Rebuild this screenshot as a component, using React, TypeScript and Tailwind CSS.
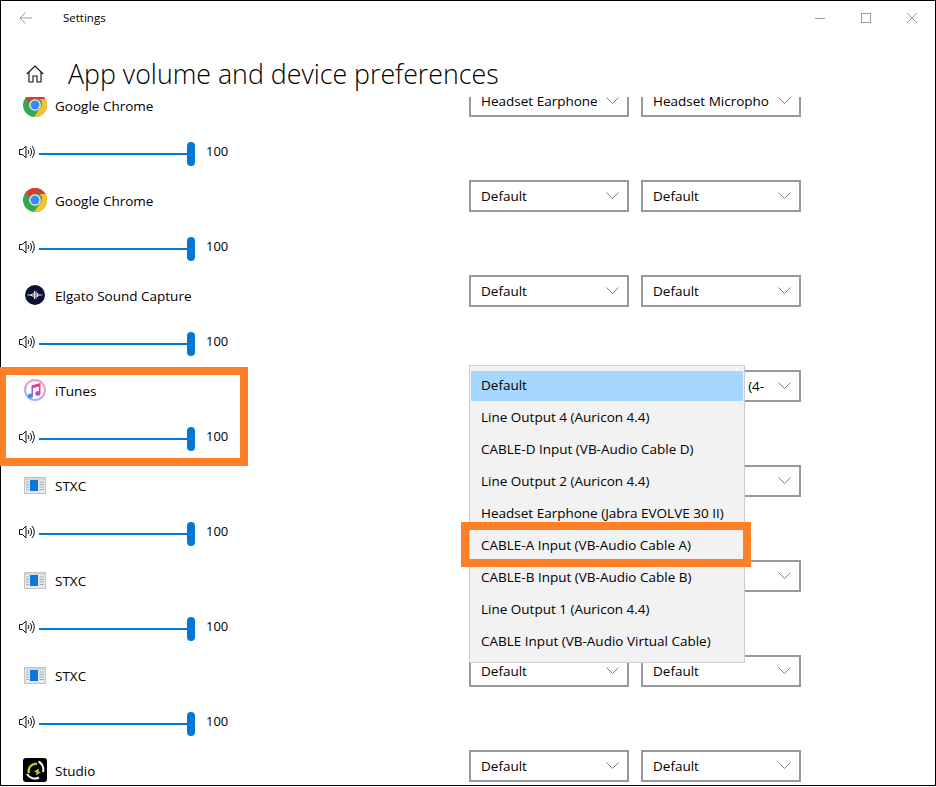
import type { ReactNode } from "react";

const font = "font-['Open_Sans',sans-serif]";

function ChromeIcon() {
  return (
    <svg width="24" height="24" viewBox="0 0 24 24">
      <circle cx="12" cy="12" r="12" fill="#34a853" />
      <path d="M22.4 6A12 12 0 0 1 11 24L17.2 15A6 6 0 0 0 17 6Z" fill="#fbc02d" />
      <path d="M2.6 4.5A12 12 0 0 1 22.4 6H12A6 6 0 0 0 6.3 10Z" fill="#dd3b30" />
      <circle cx="12" cy="12" r="5.8" fill="#f1f1f1" />
      <circle cx="12" cy="12" r="4.5" fill="#4285f4" />
    </svg>
  );
}

function ElgatoIcon() {
  return (
    <svg width="20" height="20" viewBox="0 0 20 20">
      <circle cx="10" cy="10" r="10" fill="#0e1233" />
      <path
        d="M2.5 10h1.5M5 9v2M6.5 9v2M8 8v4M9.5 6v8M11 6.5v7M12.5 8v4M14 9v2M15.5 9.4v1.2M16.5 10h1"
        stroke="#e2e5f2"
        strokeWidth="1.1"
        fill="none"
      />
    </svg>
  );
}

function ItunesIcon() {
  return (
    <svg width="22" height="22" viewBox="0 0 22 22">
      <defs>
        <linearGradient id="ring" x1="0.8" y1="0" x2="0.2" y2="1">
          <stop offset="0" stopColor="#f49ab0" />
          <stop offset="0.5" stopColor="#d49ae8" />
          <stop offset="1" stopColor="#7fbcf2" />
        </linearGradient>
        <linearGradient id="note" x1="0.8" y1="0" x2="0.2" y2="1">
          <stop offset="0" stopColor="#f5386e" />
          <stop offset="0.55" stopColor="#b24fd6" />
          <stop offset="1" stopColor="#3f8fee" />
        </linearGradient>
      </defs>
      <circle cx="11" cy="11" r="10" fill="#fbfbfd" stroke="url(#ring)" strokeWidth="1.8" />
      <path
        d="M7.5 6.5L16.5 4V14.5A2.6 2.3 0 1 1 15 12.3V7.5L9 9V17A2.6 2.3 0 1 1 7.5 14.8Z"
        fill="url(#note)"
      />
    </svg>
  );
}

function StxcIcon() {
  return (
    <svg width="22" height="17" viewBox="0 0 22 17">
      <rect x="0.5" y="0.5" width="21" height="16" fill="#e6e9ec" stroke="#c4c4c4" />
      <rect x="1" y="1" width="20" height="2" fill="#d2d6da" />
      <rect x="6" y="3" width="8" height="11" fill="#0b78dc" />
      <path d="M2 5h3M2 7.5h3M2 10h3M2 12.5h3M15.5 5h4.5M15.5 7.5h4.5M15.5 10h4.5M15.5 12.5h4.5" stroke="#a9adb2" />
    </svg>
  );
}

function StudioIcon() {
  return (
    <svg width="24" height="24" viewBox="0 0 24 24">
      <rect width="24" height="24" rx="3" fill="#000" />
      <path d="M14 6A7 7 0 0 0 6 15" stroke="#c4cc2e" strokeWidth="2.4" fill="none" />
      <path d="M15.5 3.5A9 9 0 0 1 20 14M16 19.5A9 9 0 0 1 4 16" stroke="#f4f4f4" strokeWidth="2" fill="none" />
      <path d="M11 13.5L16 10.5L15.5 13.5L18 14L13 17.5L13.5 14.5Z" fill="#c4cc2e" />
    </svg>
  );
}

function SpeakerIcon() {
  return (
    <svg width="16" height="14" viewBox="0 0 16 14" className="mb-[5px] shrink-0" fill="none" stroke="#111" strokeWidth="1">
      <path d="M0.5 4.5h3l3.5-3.5v12l-3.5-3.5h-3z" />
      <path d="M9 5a3 3 0 0 1 0 4" />
      <path d="M11 3a6 6 0 0 1 0 8" />
      <path d="M13 1a9 9 0 0 1 0 12" />
    </svg>
  );
}

function Chevron() {
  return (
    <svg width="13" height="7" viewBox="0 0 13 7" fill="none" stroke="#808080" strokeWidth="1" className="block shrink-0">
      <path d="M0.5 0.5L6.5 6.5L12.5 0.5" />
    </svg>
  );
}

function Select({ value }: { value: string }) {
  return (
    <div className="flex h-[32px] w-[160px] items-center border-2 border-[#999999] bg-white pl-[10px] pr-[8px]">
      <span className="w-[116px] overflow-hidden text-[13.5px] leading-[20px] whitespace-nowrap text-black">{value}</span>
      <span className="ml-auto mb-[2px]"><Chevron /></span>
    </div>
  );
}

type Row = { name: string; icon: ReactNode; output?: string; input?: string };

const rows: Row[] = [
  { name: "Google Chrome", icon: <ChromeIcon />, output: "Headset Earphone", input: "Headset Microphone" },
  { name: "Google Chrome", icon: <ChromeIcon /> },
  { name: "Elgato Sound Capture", icon: <ElgatoIcon /> },
  { name: "iTunes", icon: <ItunesIcon />, input: "Analog Output (4-" },
  { name: "STXC", icon: <StxcIcon /> },
  { name: "STXC", icon: <StxcIcon /> },
  { name: "STXC", icon: <StxcIcon /> },
  { name: "Studio", icon: <StudioIcon /> },
];

const options = [
  "Default",
  "Line Output 4 (Auricon 4.4)",
  "CABLE-D Input (VB-Audio Cable D)",
  "Line Output 2 (Auricon 4.4)",
  "Headset Earphone (Jabra EVOLVE 30 II)",
  "CABLE-A Input (VB-Audio Cable A)",
  "CABLE-B Input (VB-Audio Cable B)",
  "Line Output 1 (Auricon 4.4)",
  "CABLE Input (VB-Audio Virtual Cable)",
];

function AppRow({ row }: { row: Row }) {
  return (
    <div className="flex h-[95px] shrink-0">
      <div className="w-[468px] shrink-0">
        <div className="mt-[5px] flex h-[32px] items-center pl-[22px]">
          <span className="mb-[2px] flex h-[24px] w-[24px] items-center justify-center">{row.icon}</span>
          <span className="ml-[8px] text-[13.5px] text-black">{row.name}</span>
        </div>
        <div className="mt-[20px] flex h-[24px] items-center pl-[18px]">
          <SpeakerIcon />
          <div className="ml-[4px] h-[2px] w-[148px] bg-[#0078d7]" />
          <div className="h-[24px] w-[8px] rounded-full bg-[#0078d7]" />
          <span className="mb-[5px] ml-[11px] text-[13px] text-black">100</span>
        </div>
      </div>
      <div className="flex gap-[12px]">
        <Select value={row.output ?? "Default"} />
        <Select value={row.input ?? "Default"} />
      </div>
    </div>
  );
}

export default function App() {
  return (
    <div className={`relative h-[787px] w-[936px] overflow-hidden bg-white ${font}`}>
      <div className="flex h-[786px] flex-col border border-black">
        {/* Title bar */}
        <div className="flex h-[33px] shrink-0 items-center pl-[18px]">
          <svg width="13" height="12" viewBox="0 0 13 12" fill="none" stroke="#999" strokeWidth="1">
            <path d="M13 6H1M6.5 0.5L1 6L6.5 11.5" />
          </svg>
          <span className="ml-[31px] text-[11.5px] text-black">Settings</span>
          <div className="ml-auto mr-[18px] flex items-center gap-[36px]">
            <svg width="10" height="10" viewBox="0 0 10 10" stroke="#999" fill="none"><path d="M0 5.5h10" /></svg>
            <svg width="10" height="10" viewBox="0 0 10 10" stroke="#999" fill="none"><rect x="0.5" y="0.5" width="9" height="9" /></svg>
            <svg width="10" height="10" viewBox="0 0 10 10" stroke="#999" fill="none"><path d="M0 0L10 10M10 0L0 10" /></svg>
          </div>
        </div>
        {/* Heading */}
        <div className="flex h-[63px] shrink-0 items-center pl-[25px] pt-[16px]">
          <svg width="18" height="18" viewBox="0 0 18 18" fill="none" stroke="#111" strokeWidth="1.1">
            <path d="M0.8 9L9 1L17.2 9M3 7V17H7V11H11V17H15V7" />
          </svg>
          <h1 className="ml-[24px] text-[26.75px] leading-[34px] font-light text-black">App volume and device preferences</h1>
        </div>
        {/* Scrolled list */}
        <div className="min-h-0 flex-1 overflow-hidden">
          <div className="mt-[-12px] flex flex-col">
            {rows.map((row, i) => (
              <AppRow key={i} row={row} />
            ))}
          </div>
        </div>
      </div>

      {/* Open dropdown */}
      <div className="absolute left-[469px] top-[365px] flex h-[298px] w-[276px] flex-col border border-[#cccccc] bg-[#f2f2f2] px-[1px] py-[5px]">
        {options.map((o, i) => (
          <div
            key={o}
            className={
              i === 0
                ? "flex h-[30px] shrink-0 items-center bg-[#a6d8ff] pb-[2px] pl-[10px] text-[13.5px] whitespace-nowrap text-black"
                : "flex h-[32px] shrink-0 items-center pl-[10px] text-[13.5px] whitespace-nowrap text-black"
            }
          >
            {o}
          </div>
        ))}
      </div>

      {/* Annotation boxes */}
      <div className="absolute left-[-2px] top-[367px] h-[99px] w-[250px] border-[8px] border-[#ff7f27]" />
      <div className="absolute left-[461px] top-[522px] h-[45px] w-[290px] border-[8px] border-[#ff7f27]" />
    </div>
  );
}
